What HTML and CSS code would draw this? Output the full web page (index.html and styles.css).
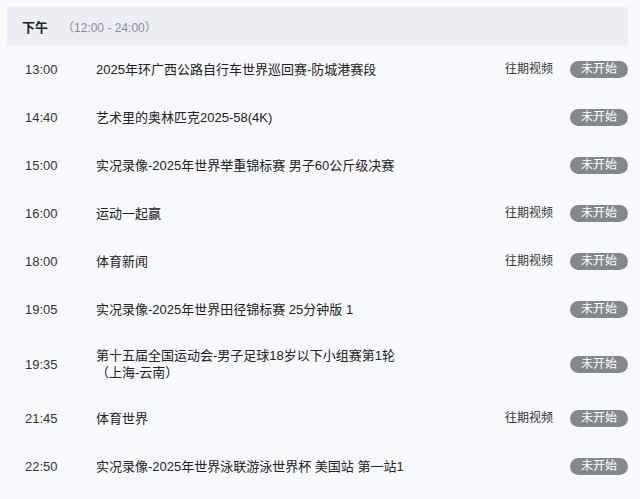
FILE: index.html
```html
<!DOCTYPE html>
<html lang="zh-CN">
<head>
    <meta charset="UTF-8">
    <meta name="viewport" content="width=device-width, initial-scale=1.0">
    <title>节目单</title>
    <link rel="stylesheet" href="styles.css">
</head>
<body>

<div class="schedule">
    <!-- Section header -->
    <div class="period">
        <span class="period-name">下午</span>
        <span class="period-range">（12:00 - 24:00）</span>
    </div>

    <div class="row">
        <span class="time">13:00</span>
        <span class="title">2025年环广西公路自行车世界巡回赛-防城港赛段</span>
        <a class="replay" href="#">往期视频</a>
        <span class="status">未开始</span>
    </div>
    <div class="row">
        <span class="time">14:40</span>
        <span class="title">艺术里的奥林匹克2025-58(4K)</span>
        <span class="status">未开始</span>
    </div>
    <div class="row">
        <span class="time">15:00</span>
        <span class="title">实况录像-2025年世界举重锦标赛 男子60公斤级决赛</span>
        <span class="status">未开始</span>
    </div>
    <div class="row">
        <span class="time">16:00</span>
        <span class="title">运动一起赢</span>
        <a class="replay" href="#">往期视频</a>
        <span class="status">未开始</span>
    </div>
    <div class="row">
        <span class="time">18:00</span>
        <span class="title">体育新闻</span>
        <a class="replay" href="#">往期视频</a>
        <span class="status">未开始</span>
    </div>
    <div class="row">
        <span class="time">19:05</span>
        <span class="title">实况录像-2025年世界田径锦标赛 25分钟版 1</span>
        <span class="status">未开始</span>
    </div>
    <div class="row">
        <span class="time">19:35</span>
        <span class="title">第十五届全国运动会-男子足球18岁以下小组赛第1轮<br>（上海-云南）</span>
        <span class="status">未开始</span>
    </div>
    <div class="row">
        <span class="time">21:45</span>
        <span class="title">体育世界</span>
        <a class="replay" href="#">往期视频</a>
        <span class="status">未开始</span>
    </div>
    <div class="row">
        <span class="time">22:50</span>
        <span class="title">实况录像-2025年世界泳联游泳世界杯 美国站 第一站1</span>
        <span class="status">未开始</span>
    </div>
</div>

</body>
</html>
```

FILE: styles.css
```css
body {
    margin: 0;
    background-color: #f7f9fc;
    font-family: "Liberation Sans", "Noto Sans CJK SC", sans-serif;
    color: #222;
}

.schedule {
    margin: 7px 12px 0 7px;
}

/* Period header */
.period {
    display: flex;
    align-items: center;
    height: 38px;
    padding-left: 15px;
    background-color: #eceef4;
}
.period-name {
    font-size: 13px;
    font-weight: bold;
    color: #222;
}
.period-range {
    margin-left: 14px;
    font-size: 12px;
    color: #8a8c94;
}

/* Programme rows */
.row {
    display: flex;
    align-items: center;
    min-height: 48px;
    padding: 14px 0 13px 18px;
    box-sizing: border-box;
    font-size: 13px;
    line-height: 17px;
}
.time {
    width: 71px;
    flex-shrink: 0;
    color: #333;
}
.title {
    flex: 1;
}
.replay {
    margin-right: 17px;
    font-size: 12px;
    color: #333;
    text-decoration: none;
}
.status {
    width: 58px;
    height: 17px;
    line-height: 17px;
    border-radius: 9px;
    background-color: #85878f;
    color: white;
    font-size: 12px;
    text-align: center;
}
```
